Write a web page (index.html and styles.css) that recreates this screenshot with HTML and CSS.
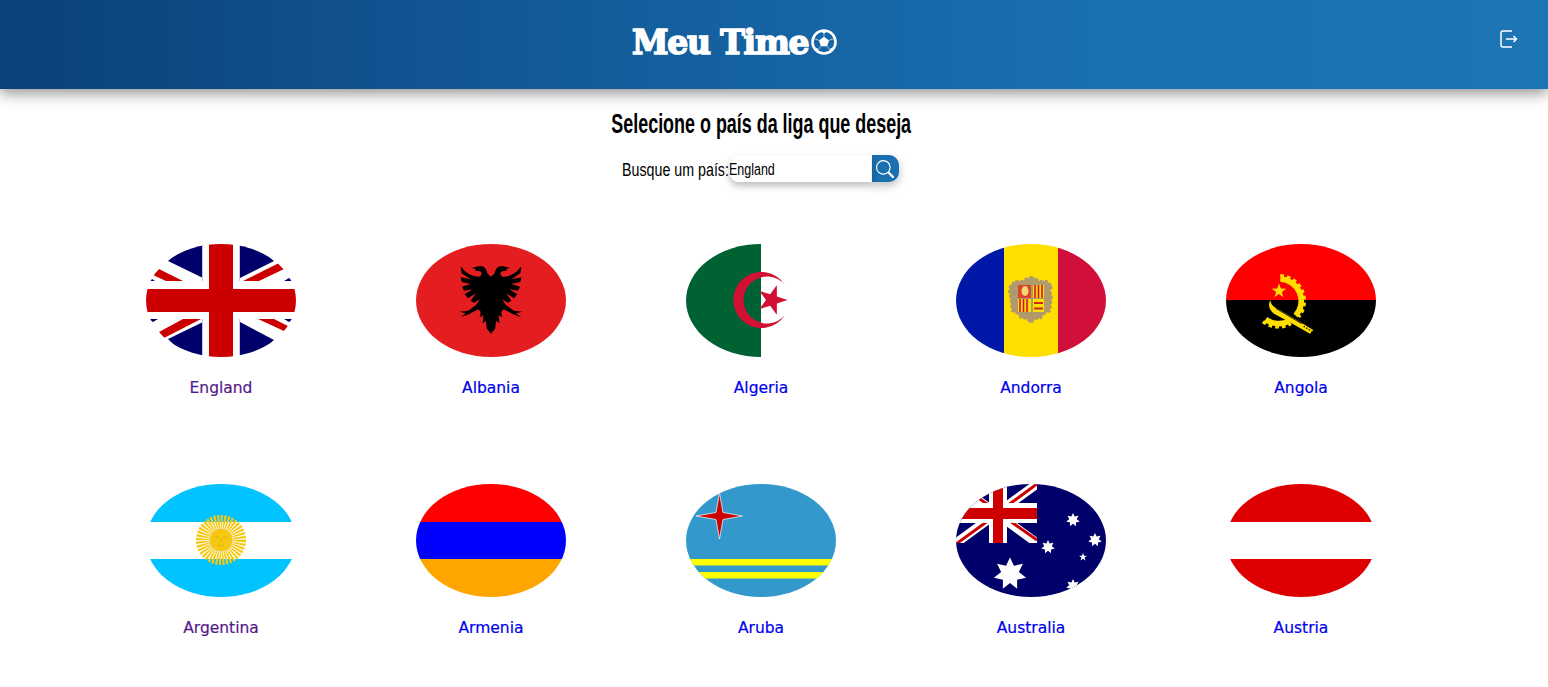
FILE: index.html
```html
<!DOCTYPE html>
<html lang="pt-BR">
<head>
  <meta charset="UTF-8" />
  <title>Meu Time</title>
  <link rel="stylesheet" href="styles.css">
</head>
<body>

  <header class="topbar">
    <div class="brand">
      <h1>Meu Time</h1>
      <svg class="ball" viewBox="0 0 26 26">
        <circle cx="13" cy="13" r="11.500" fill="none" stroke="#fff" stroke-width="2.600"/>
        <polygon points="13,7.800 18,11.400 16.100,17.200 9.900,17.200 8,11.400" fill="#fff"/>
        <path d="M13 7.800V3M18 11.400 23 9.500M16.100 17.200 19.500 22M9.900 17.200 6.500 22M8 11.400 3 9.500" stroke="#fff" stroke-width=".9" opacity=".7"/>
        <path d="M9 2.500 13 4.200 17 2.500 17 1 9 1zM1.500 10 3.800 8.500 5 5 2.500 6zM24.500 10 22.200 8.500 21 5 23.500 6zM4.500 21.500 7.500 22 6.500 19.500 3 18zM21.500 21.500 18.500 22 19.500 19.500 23 18z" fill="#fff"/>
      </svg>
    </div>
    <a class="logout" href="#">
      <svg viewBox="0 0 18 18" fill="none" stroke="#fff" stroke-width="1.500">
        <path d="M12 1H3A2 2 0 0 0 1 3V15A2 2 0 0 0 3 17H12"/>
        <path d="M6 9H16.500M13.500 6 16.500 9 13.500 12"/>
      </svg>
    </a>
  </header>

  <main class="content">
    <h2><span>Selecione o país da liga que deseja</span></h2>

    <form class="search">
      <label for="country">Busque um país:</label>
      <input type="text" id="country" value="England" />
      <button type="button">
        <svg viewBox="0 0 16 16" fill="#fff">
          <path d="M11.742 10.344a6.500 6.500 0 1 0-1.397 1.398h-.001c.03.04.062.078.098.115l3.850 3.850a1 1 0 0 0 1.415-1.414l-3.850-3.850a1.007 1.007 0 0 0-.115-.1zM12 6.500a5.500 5.500 0 1 1-11 0 5.500 5.500 0 0 1 11 0z"/>
        </svg>
      </button>
    </form>

    <section class="countries">

      <a class="country visited" href="#">
        <svg class="flag" viewBox="0 0 150 113">
          <rect width="150" height="113" fill="#fff"/>
          <path fill="#00006a" d="M57 0V34L22 17 40 0zM94 0V34L128 17 110 0zM57 113V78L22 95 40 113zM94 113V78L128 96 110 113zM3 37H9L6 35zM138 37H147L143 34zM3 75H12L7 78zM138 75H147L143 78z"/>
          <path fill="#c00" d="M7 31 13 25 37 37H20zM97 37 133 19 138 25 113 37zM13 88 37 75H55L18 94zM112 75H128L142 82 138 87z"/>
          <path stroke="#c8c8e4" d="M56.500 0V37M93.500 0V37M56.500 75V113M93.500 75V113"/>
          <rect x="63" width="24" height="113" fill="#c00"/>
          <rect y="45" width="150" height="23" fill="#c00"/>
        </svg>
        <span>England</span>
      </a>

      <a class="country" href="#">
        <svg class="flag" viewBox="0 0 150 113">
          <rect width="150" height="113" fill="#e41e20"/>
          <g transform="translate(34 16) scale(.3333)">
            <path id="eagle" d="M123 50 112 40C110 30 105 20 95 19H85L65 24 78 27 75 32 90 34C98 38 95 50 85 50 70 50 45 40 35 22L32 22 35 40 62 58 32 52 35 66 62 72 36 80 42 92 68 88 44 103 54 115 78 100 62 122 72 128 90 118 78 135 55 152 28 155 48 160 32 172 58 162 85 148 92 155 90 172 100 165 98 190 108 182 110 205 123 222Z"/>
            <use href="#eagle" transform="matrix(-1 0 0 1 246 0)"/>
          </g>
        </svg>
        <span>Albania</span>
      </a>

      <a class="country" href="#">
        <svg class="flag" viewBox="0 0 150 113">
          <rect width="150" height="113" fill="#fff"/>
          <rect width="75" height="113" fill="#006233"/>
          <path fill="#d21034" d="M99 41A28 28 0 1 0 99 71 23.500 23.500 0 1 1 99 41Z"/>
          <polygon fill="#d21034" points="101.500,56 90.900,59.500 90.800,70.700 84.100,61.700 73.500,65.100 80,56 73.500,46.900 84.100,50.300 90.800,41.300 90.900,52.500"/>
        </svg>
        <span>Algeria</span>
      </a>

      <a class="country" href="#">
        <svg class="flag" viewBox="0 0 150 113">
          <rect width="48" height="113" fill="#0018a8"/>
          <rect x="48" width="54" height="113" fill="#fedf00"/>
          <rect x="102" width="48" height="113" fill="#d0103a"/>
          <path fill="#b09a6c" stroke="#b09a6c" stroke-width="2" stroke-dasharray="3 2" d="M75 33 81 35 83 37 91 37 96 42 94 47 96 52 94 67 88 70 85 74 79 75 75 79 71 75 65 74 62 70 56 67 54 52 53 47 54 42 59 37 67 37 69 35Z"/>
          <rect x="62" y="41" width="13" height="13" fill="#d8432a"/>
          <ellipse cx="69" cy="47" rx="3.500" ry="5" fill="#f5d76e"/>
          <rect x="77" y="41" width="11" height="13" fill="#fedf00"/>
          <path stroke="#d0103a" stroke-width="1.600" d="M79 41V54M82.500 41V54M86 41V54"/>
          <rect x="62" y="55" width="13" height="13" fill="#fedf00"/>
          <path stroke="#d0103a" stroke-width="1.600" d="M64 55V68M67.500 55V68M71 55V68"/>
          <rect x="77" y="55" width="11" height="13" fill="#fedf00"/>
          <path stroke="#c8281e" stroke-width="2.200" d="M78 59H87M78 64.500H87"/>
        </svg>
        <span>Andorra</span>
      </a>

      <a class="country" href="#">
        <svg class="flag" viewBox="0 0 150 113">
          <rect width="150" height="56" fill="#f00"/>
          <rect y="56" width="150" height="57"/>
          <g transform="translate(29 21) scale(.3333)">
            <polygon fill="#ffde00" points="72,55 77.300,70.700 93.900,70.900 80.600,80.800 85.500,96.600 72,87 58.500,96.600 63.400,80.800 50.100,70.900 66.700,70.700"/>
            <g fill="none" stroke="#ffde00">
              <path stroke-width="17" d="M76 42A66 66 0 0 1 122 152"/>
              <path stroke-width="10" stroke-dasharray="11 9" d="M76 32A76 76 0 0 1 131 156"/>
              <path stroke-width="17" d="M32 163A68 68 0 0 0 103 168"/>
              <path stroke-width="10" stroke-dasharray="11 9" d="M24 170A76 76 0 0 0 108 176"/>
            </g>
            <path fill="#ffde00" d="M46 106C38 120 42 135 60 148L115 178 165 206 175 195 120 162 62 128C54 124 48 118 46 106Z"/>
            <path stroke="#000" stroke-width="2.500" d="M62 130 140 176"/>
            <path stroke="#000" stroke-width="4" stroke-dasharray="4 5" d="M146 184 170 199"/>
          </g>
        </svg>
        <span>Angola</span>
      </a>

      <a class="country visited" href="#">
        <svg class="flag" viewBox="0 0 150 113">
          <rect width="150" height="38" fill="#00c3ff"/>
          <rect y="75" width="150" height="38" fill="#00c3ff"/>
          <circle cx="75" cy="56" r="18" fill="none" stroke="#f6c812" stroke-width="14" stroke-dasharray="1.800 1"/>
          <circle cx="75" cy="56" r="12" fill="#f6c812" stroke="#e9e3c0"/>
          <path fill="none" stroke="#c9a400" stroke-width=".6" d="M69 53H73M77 53H81M72 61Q75 63 78 61M75 54V58"/>
        </svg>
        <span>Argentina</span>
      </a>

      <a class="country" href="#">
        <svg class="flag" viewBox="0 0 150 113">
          <rect width="150" height="38" fill="#f00"/>
          <rect y="38" width="150" height="37" fill="#00f"/>
          <rect y="75" width="150" height="38" fill="#ffa500"/>
        </svg>
        <span>Armenia</span>
      </a>

      <a class="country" href="#">
        <svg class="flag" viewBox="0 0 150 113">
          <rect width="150" height="113" fill="#39c"/>
          <rect y="75" width="150" height="6.500" fill="#ff0"/>
          <rect y="88" width="150" height="6.500" fill="#ff0"/>
          <polygon fill="#c00" stroke="#e8eef2" stroke-width=".8" points="33.500,9 37,28.500 56.500,32 37,35.500 33.500,55 30,35.500 10,32 30,28.500"/>
        </svg>
        <span>Aruba</span>
      </a>

      <a class="country" href="#">
        <svg class="flag" viewBox="0 0 150 113">
          <rect width="150" height="113" fill="#00006a"/>
          <svg width="81" height="59" viewBox="0 0 81 59">
            <path stroke="#fff" stroke-width="9" d="M0 0 81 59M81 0 0 59"/>
            <path stroke="#c00" stroke-width="3" d="M3 0 42 28M81 0 44 27M0 60 40 31M81 56 44 30"/>
            <rect x="33" width="18" height="59" fill="#fff"/>
            <rect y="19" width="81" height="20" fill="#fff"/>
            <rect x="37" width="10" height="59" fill="#c00"/>
            <rect y="24" width="81" height="11" fill="#c00"/>
          </svg>
          <g fill="#fff">
            <polygon id="star" points="0,-10 2.390,-4.950 7.820,-6.230 5.360,-1.230 9.750,2.230 4.300,3.430 4.340,9.010 0,5.500 -4.340,9.010 -4.300,3.430 -9.750,2.230 -5.360,-1.230 -7.820,-6.230 -2.390,-4.950" transform="translate(54 90) scale(1.650)"/>
            <use href="#star" transform="translate(117 36) scale(.4242) translate(-54 -90)"/>
            <use href="#star" transform="translate(139 56) scale(.4242) translate(-54 -90)"/>
            <use href="#star" transform="translate(92 63) scale(.4242) translate(-54 -90)"/>
            <polygon points="0,-10 2.400,-3.200 9.500,-3 3.800,1.300 5.900,8.100 0,4 -5.900,8.100 -3.800,1.300 -9.500,-3 -2.400,-3.200" transform="translate(127 73) scale(.42)"/>
            <use href="#star" transform="translate(117 102) scale(.4242) translate(-54 -90)"/>
          </g>
        </svg>
        <span>Australia</span>
      </a>

      <a class="country" href="#">
        <svg class="flag" viewBox="0 0 150 113">
          <rect width="150" height="38" fill="#de0000"/>
          <rect y="75" width="150" height="38" fill="#de0000"/>
        </svg>
        <span>Austria</span>
      </a>

    </section>
  </main>

</body>
</html>
```

FILE: styles.css
```css
body {
  margin: 0;
  background: #fff;
  color: #000;
  font-family: 'Liberation Sans', sans-serif;
}

.topbar {
  height: 89px;
  display: flex;
  align-items: center;
  padding: 0 30px 0 632px;
  background: linear-gradient(90deg, #0b4079 0%, #125a98 35%, #1a6fb0 70%, #1c75b5 100%);
  box-shadow: 0 4px 14px rgba(0, 0, 0, 0.45);
}

.brand {
  display: flex;
  align-items: center;
  margin-top: -5px;
}

.brand h1 {
  margin: 0;
  width: 179px;
  font-family: 'DejaVu Serif', serif;
  font-size: 33px;
  font-weight: 700;
  letter-spacing: -1.2px;
  white-space: nowrap;
  color: #fff;
  -webkit-text-stroke: 1.6px #fff;
}

.ball {
  width: 26px;
  height: 26px;
}

.logout {
  margin-left: auto;
  display: flex;
  margin-top: -11px;
}

.logout svg {
  width: 18px;
  height: 18px;
}

.content {
  width: 1522px;
  text-align: center;
}

h2 {
  margin: 0;
  padding-top: 17px;
  font-size: 28px;
  line-height: 36px;
  font-weight: 700;
}

/* no condensed font on hand, so the text gets squeezed */
h2 span {
  display: inline-block;
  white-space: nowrap;
  transform: scaleX(0.64);
}

.search {
  display: flex;
  justify-content: center;
  align-items: center;
  margin: 12px 0 0 -2px;
  font-size: 19px;
}

.search label {
  width: 107px;
  padding-top: 2px;
  line-height: 27px;
  text-align: left;
  white-space: nowrap;
  transform-origin: left;
  transform: scaleX(0.75);
}

.search input {
  width: 183px;
  height: 27px;
  box-sizing: border-box;
  margin-right: -40px;
  padding: 2px 0 0;
  border: none;
  outline: none;
  font-family: inherit;
  font-size: 16px;
  border-radius: 12px 0 0 12px;
  box-shadow: 0 4px 8px rgba(0, 0, 0, 0.25);
  transform-origin: left;
  transform: scaleX(0.78);
}

.search button {
  width: 27px;
  height: 27px;
  padding: 0;
  border: none;
  display: flex;
  align-items: center;
  justify-content: center;
  background: #1a6fb0;
  border-radius: 0 10px 10px 0;
  box-shadow: 0 4px 8px rgba(0, 0, 0, 0.25);
}

.search button svg {
  width: 18px;
  height: 18px;
}

.countries {
  display: grid;
  grid-template-columns: repeat(5, 270px);
  row-gap: 87px;
  justify-content: center;
  margin-top: 61px;
}

.country {
  display: flex;
  flex-direction: column;
  align-items: center;
  color: #0000ee;
  text-decoration: none;
  font-family: 'DejaVu Sans', sans-serif;
  font-size: 15.500px;
  -webkit-text-stroke: 0.2px;
}

.country.visited {
  color: #551a8b;
}

.flag {
  width: 150px;
  height: 113px;
  border-radius: 50%;
  margin-bottom: 22px;
}
```
